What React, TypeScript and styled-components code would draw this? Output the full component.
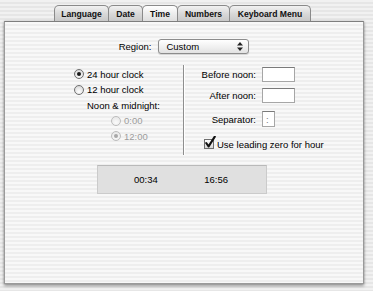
import styled, { createGlobalStyle } from "styled-components";

const GlobalStyle = createGlobalStyle`
  html, body {
    margin: 0;
    padding: 0;
  }
  body {
    width: 373px;
    height: 291px;
    overflow: hidden;
    background: repeating-linear-gradient(
      to bottom,
      #f1f1f1 0px,
      #f1f1f1 2px,
      #e6e6e6 2px,
      #e6e6e6 4px
    );
    font-family: "Liberation Sans", Arial, sans-serif;
    font-size: 9.5px;
    color: #000;
  }
`;

const tabs = [
  { label: "Language", width: 55 },
  { label: "Date", width: 35 },
  { label: "Time", width: 36, selected: true },
  { label: "Numbers", width: 53 },
  { label: "Keyboard Menu", width: 82 },
];

export default function App() {
  return (
    <>
      <GlobalStyle />
      <Window>
        <TabBar>
          {tabs.map((t) => (
            <Tab key={t.label} $width={t.width} $selected={!!t.selected}>
              {t.label}
            </Tab>
          ))}
        </TabBar>
        <Panel>
          <RegionRow>
            <span>Region:</span>
            <Popup>
              <span>Custom</span>
              <svg width="6" height="9" viewBox="0 0 6 9">
                <path d="M3 0 L6 3.5 L0 3.5 Z" fill="#222" />
                <path d="M3 9 L6 5.5 L0 5.5 Z" fill="#222" />
              </svg>
            </Popup>
          </RegionRow>

          <Columns>
            <LeftCol>
              <RadioRow>
                <Radio $checked />
                <span>24 hour clock</span>
              </RadioRow>
              <RadioRow>
                <Radio />
                <span>12 hour clock</span>
              </RadioRow>
              <SubLabel>Noon &amp; midnight:</SubLabel>
              <RadioRow $indent={37} $disabled>
                <Radio $disabled />
                <span>0:00</span>
              </RadioRow>
              <RadioRow $indent={37} $disabled>
                <Radio $checked $disabled />
                <span>12:00</span>
              </RadioRow>
            </LeftCol>
            <Divider />
            <RightCol>
              <FieldRow $gap={0}>
                <FieldLabel>Before noon:</FieldLabel>
                <TextBox $width={33} />
              </FieldRow>
              <FieldRow $gap={6}>
                <FieldLabel>After noon:</FieldLabel>
                <TextBox $width={33} />
              </FieldRow>
              <FieldRow $gap={8}>
                <FieldLabel>Separator:</FieldLabel>
                <TextBox $width={13} $height={16}>
                  :
                </TextBox>
              </FieldRow>
              <CheckRow>
                <CheckBox>
                  <svg width="12" height="13" viewBox="0 0 12 13">
                    <path
                      d="M2.2 7 L4.6 10.4 L10.8 0.6"
                      fill="none"
                      stroke="#111"
                      strokeWidth="2.1"
                      strokeLinecap="round"
                      strokeLinejoin="round"
                    />
                  </svg>
                </CheckBox>
                <span>Use leading zero for hour</span>
              </CheckRow>
            </RightCol>
          </Columns>

          <SampleBox>
            <span>00:34</span>
            <span>16:56</span>
          </SampleBox>
        </Panel>
      </Window>
    </>
  );
}

const Window = styled.div`
  width: 373px;
  height: 291px;
  box-sizing: border-box;
  padding-top: 5px;
`;

const TabBar = styled.div`
  display: flex;
  padding-left: 54px;
  height: 16px;
`;

const Tab = styled.div<{ $width: number; $selected: boolean }>`
  box-sizing: border-box;
  width: ${(p) => p.$width}px;
  height: 16px;
  display: flex;
  align-items: center;
  justify-content: center;
  font-size: 8.6px;
  font-weight: bold;
  color: #111;
  border: 1px solid #8a8a8a;
  border-bottom: none;
  border-radius: 5px 5px 0 0;
  margin-right: -1px;
  background: ${(p) =>
    p.$selected
      ? "linear-gradient(to bottom, #ffffff 0%, #efefef 45%, #dedede 100%)"
      : "linear-gradient(to bottom, #f2f2f2 0%, #d9d9d9 50%, #c8c8c8 100%)"};
`;

const Panel = styled.div`
  box-sizing: border-box;
  margin-left: 4px;
  width: 360px;
  height: 263px;
  border: 1px solid #9a9a9a;
  border-top-color: #7e7e7e;
  box-shadow: 0 2px 3px rgba(0, 0, 0, 0.35), 0 0 2px rgba(0, 0, 0, 0.2);
  background: repeating-linear-gradient(
    to bottom,
    #f8f8f8 0px,
    #f8f8f8 2px,
    #eeeeee 2px,
    #eeeeee 4px
  );
`;

const RegionRow = styled.div`
  display: flex;
  justify-content: center;
  align-items: center;
  gap: 7px;
  margin-top: 17px;
  height: 15px;
`;

const Popup = styled.div`
  box-sizing: border-box;
  width: 91px;
  height: 15px;
  display: flex;
  align-items: center;
  justify-content: space-between;
  padding: 0 5px 0 7px;
  border: 1px solid #8c8c8c;
  border-radius: 3px;
  background: linear-gradient(to bottom, #ffffff 0%, #f1f1f1 50%, #e2e2e2 100%);
  box-shadow: 0 1px 1px rgba(0, 0, 0, 0.15);
`;

const Columns = styled.div`
  display: flex;
  margin-top: 11px;
  margin-left: 69px;
  height: 90px;
`;

const LeftCol = styled.div`
  width: 109px;
  padding-top: 1.5px;
  display: flex;
  flex-direction: column;
`;

const RadioRow = styled.div<{ $indent?: number; $disabled?: boolean }>`
  display: flex;
  align-items: center;
  gap: 3px;
  height: 15.5px;
  padding-left: ${(p) => p.$indent ?? 0}px;
  color: ${(p) => (p.$disabled ? "#9c9c9c" : "#000")};
`;

const Radio = styled.span<{ $checked?: boolean; $disabled?: boolean }>`
  box-sizing: border-box;
  width: 10px;
  height: 10px;
  border-radius: 50%;
  border: 1px solid ${(p) => (p.$disabled ? "#bdbdbd" : "#707070")};
  background: ${(p) =>
    p.$disabled
      ? "radial-gradient(circle at 50% 70%, #fafafa, #e4e4e4)"
      : "radial-gradient(circle at 50% 70%, #ffffff, #d0d0d0)"};
  display: flex;
  align-items: center;
  justify-content: center;
  &::after {
    content: "";
    display: ${(p) => (p.$checked ? "block" : "none")};
    width: 4px;
    height: 4px;
    border-radius: 50%;
    background: ${(p) => (p.$disabled ? "#a8a8a8" : "#1a1a1a")};
  }
`;

const SubLabel = styled.div`
  height: 15.5px;
  line-height: 15.5px;
  padding-left: 13px;
`;

const Divider = styled.div`
  width: 1px;
  background: #8e8e8e;
  box-shadow: 1px 0 0 #ffffff;
`;

const RightCol = styled.div`
  display: flex;
  flex-direction: column;
  padding-top: 2px;
`;

const FieldRow = styled.div<{ $gap: number }>`
  display: flex;
  align-items: center;
  margin-top: ${(p) => p.$gap}px;
`;

const FieldLabel = styled.span`
  width: 72px;
  text-align: right;
  margin-right: 6px;
`;

const TextBox = styled.div<{ $width: number; $height?: number }>`
  box-sizing: border-box;
  width: ${(p) => p.$width}px;
  height: ${(p) => p.$height ?? 15}px;
  background: #ffffff;
  border: 1px solid #a6a6a6;
  border-top-color: #7a7a7a;
  color: #777;
  display: flex;
  align-items: center;
  padding-left: 3px;
`;

const CheckRow = styled.div`
  display: flex;
  align-items: center;
  gap: 3px;
  margin-top: 10px;
  padding-left: 20px;
  height: 14px;
`;

const CheckBox = styled.span`
  position: relative;
  box-sizing: border-box;
  width: 10px;
  height: 10px;
  border: 1px solid #6e6e6e;
  background: linear-gradient(to bottom, #ffffff, #d6d6d6);
  svg {
    position: absolute;
    left: -1px;
    top: -4px;
  }
`;

const SampleBox = styled.div`
  box-sizing: border-box;
  margin-top: 10px;
  margin-left: 92px;
  width: 170px;
  height: 29px;
  display: flex;
  align-items: center;
  justify-content: space-between;
  padding: 0 38px 0 36px;
  background: #e0e0e0;
  border: 1px solid #cbcbcb;
  border-top-color: #b9b9b9;
`;
